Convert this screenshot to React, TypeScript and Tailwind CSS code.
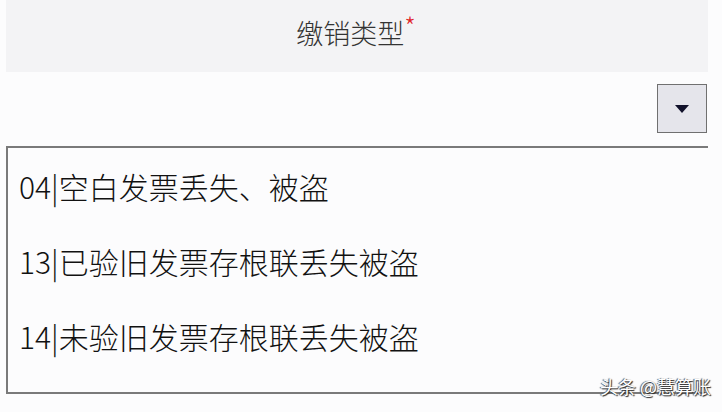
import { type FC } from 'react';

const items = [
  { code: '04', label: '空白发票丢失、被盗' },
  { code: '13', label: '已验旧发票存根联丢失被盗' },
  { code: '14', label: '未验旧发票存根联丢失被盗' },
];

const CaretDown = () => (
  <svg width="14" height="8" viewBox="0 0 14 8">
    <path d="M0 0h14L7 8z" fill="#11112a" />
  </svg>
);

const App: FC = () => {
  return (
    <div
      className="w-[722px] h-[412px] bg-[#fcfcfd] pl-[6px] pr-[14px] overflow-hidden"
      style={{ fontFamily: '"Noto Sans CJK SC", "Noto Sans", sans-serif' }}
    >
      {/* Header */}
      <div className="h-[72px] bg-[#f3f3f5] flex items-center justify-center pb-[8px] pr-[2px]">
        <span className="text-[27px] font-light text-[#333] leading-none">缴销类型</span>
        <span className="text-[26px] font-light text-[#e0262b] leading-none self-start mt-[13px]">*</span>
      </div>

      {/* Select button row */}
      <div className="h-[74px] flex justify-end items-start pt-[12px] pr-[1px]">
        <button
          type="button"
          className="w-[50px] h-[49px] bg-[#e5e5eb] border border-[#707070] flex items-center justify-center"
        >
          <CaretDown />
        </button>
      </div>

      {/* Options list */}
      <div className="relative h-[248px] border-l-2 border-t-2 border-b-2 border-[#7a7a7a]">
        {items.map(item => (
          <div
            key={item.code}
            className="h-[75px] flex items-center pl-[11px] text-[30px] font-light text-[#111] leading-none"
          >
            {item.code}|{item.label}
          </div>
        ))}

        <div className="absolute right-[-3px] bottom-[-3px] text-[18px] text-white leading-none [text-shadow:1px_1px_1px_#222,-1px_0_1px_#444]">
          头条 @慧算账
        </div>
      </div>
    </div>
  );
};

export default App;
